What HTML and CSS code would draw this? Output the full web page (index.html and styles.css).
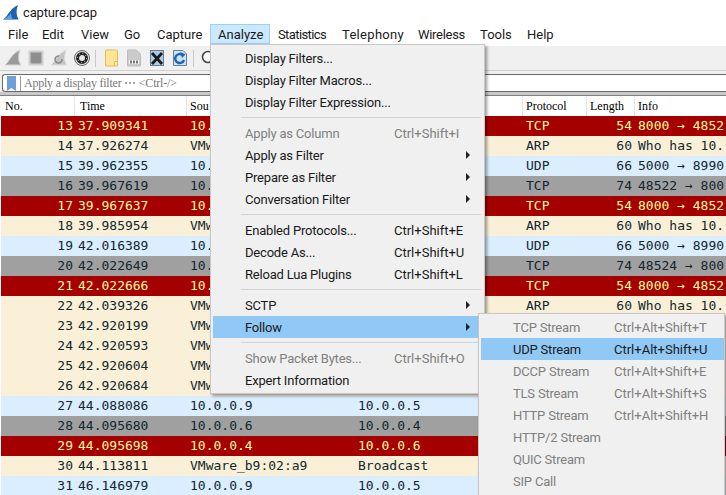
FILE: index.html
```html
<!DOCTYPE html>
<html>
<head>
    <meta charset="utf-8">
    <title>capture.pcap</title>
    <link rel="stylesheet" href="styles.css">
</head>
<body>
    <div class="titlebar">
        <svg width="16" height="15" viewBox="0 0 16 15"><path d="M0 14.5C5 12 6 4 15 0 13 5 13 10 15.5 14.5Z" fill="#1c62ad"/><path d="M0 14.5C4 13 6 11 8 8 8 11 9 13 10 14.5Z" fill="#5fa0de"/></svg>
        <span>capture.pcap</span>
    </div>
    <div class="menubar">
        <span class="top">File</span>
        <span class="top">Edit</span>
        <span class="top">View</span>
        <span class="top">Go</span>
        <span class="top">Capture</span>
        <span class="top open">Analyze</span>
        <span class="top">Statistics</span>
        <span class="top">Telephony</span>
        <span class="top">Wireless</span>
        <span class="top">Tools</span>
        <span class="top">Help</span>
    </div>
    <div class="toolbar">
        <svg width="20" height="18" viewBox="0 0 20 18"><path d="M2 16C6 13 8 5 17 1 15 7 15 12 18 16Z" fill="#9a9a9a" stroke="#d4d4d4"/></svg>
        <svg width="20" height="18" viewBox="0 0 20 18"><rect x="3.5" y="2.5" width="13" height="13" fill="#8f8f8f" stroke="#cfcfcf" stroke-width="2"/></svg>
        <svg width="20" height="18" viewBox="0 0 20 18"><path d="M2 16C6 13 8 5 17 1 15 7 15 12 18 16Z" fill="#c4c4c4" stroke="#dedede"/><path d="M13 10A3.5 3.5 0 1 1 10 7" fill="none" stroke="#8a8a8a" stroke-width="1.5"/></svg>
        <svg width="20" height="18" viewBox="0 0 20 18"><circle cx="10" cy="9" r="7.5" fill="#e6e6e6" stroke="#666"/><circle cx="10" cy="9" r="4.5" fill="none" stroke="#222" stroke-width="3"/><circle cx="10" cy="9" r="4.5" fill="none" stroke="#ddd" stroke-dasharray="1 2.5"/><circle cx="10" cy="9" r="1.2" fill="#eee"/></svg>
        <i class="sep"></i>
        <svg width="20" height="18" viewBox="0 0 20 18"><path d="M4.5 1H15.500L16.500 2V17H4.500Z" fill="#fde59a" stroke="#e6bd52"/><path d="M13.500 17V12.500H16.500" fill="#fff0bd" stroke="#e6bd52"/></svg>
        <svg width="20" height="18" viewBox="0 0 20 18"><path d="M3.500 1H12L16.500 5V17H3.500Z" fill="#cbcbcb" stroke="#bcbcbc"/><path d="M5 11H15V15H5Z" fill="#f4f4f4"/><path d="M6 13H14" stroke="#777" stroke-width="3" stroke-dasharray="2 1"/></svg>
        <svg width="20" height="18" viewBox="0 0 20 18"><rect x="3.500" y="1.500" width="13" height="15" fill="#a9cdea" stroke="#6d7f8d"/><path d="M5 4L15 15M15 4L5 15" stroke="#1c1c1c" stroke-width="2.800"/></svg>
        <svg width="20" height="18" viewBox="0 0 20 18"><path d="M3.500 1.500H13L16.500 5V16.500H3.500Z" fill="#cfe2f2" stroke="#6d7f8d"/><path d="M14 11A4.500 4.500 0 1 1 12.500 6" fill="none" stroke="#1a68b0" stroke-width="2.400"/><path d="M10.500 3L15.500 5.500 12 9Z" fill="#1a68b0"/></svg>
        <i class="sep"></i>
        <svg width="20" height="18" viewBox="0 0 20 18"><circle cx="9" cy="8" r="5.500" fill="#fff" stroke="#444" stroke-width="1.600"/></svg>
    </div>
    <div class="filterbar">
        <div class="filterbox">
            <svg class="bookmark" width="9" height="15" viewBox="0 0 9 15"><path d="M0 0H9V15L4.500 12 0 15Z" fill="#6f9fd8"/></svg>
            <span class="hint">Apply a display filter ⋯ &lt;Ctrl-/&gt;</span>
        </div>
    </div>
    <div class="packets">
        <div class="row head">
            <span class="no">No.</span><span class="time">Time</span><span class="src">Sou</span><span class="dst"></span><span class="proto">Protocol</span><span class="len">Length</span><span class="info">Info</span>
        </div>
        <div class="row red"><span class="no">13</span><span class="time">37.909341</span><span class="src">10.</span><span class="dst"></span><span class="proto">TCP</span><span class="len">54</span><span class="info">8000 → 4852</span></div>
        <div class="row cream"><span class="no">14</span><span class="time">37.926274</span><span class="src">VMw</span><span class="dst"></span><span class="proto">ARP</span><span class="len">60</span><span class="info">Who has 10.</span></div>
        <div class="row blue"><span class="no">15</span><span class="time">39.962355</span><span class="src">10.</span><span class="dst"></span><span class="proto">UDP</span><span class="len">66</span><span class="info">5000 → 8990</span></div>
        <div class="row gray"><span class="no">16</span><span class="time">39.967619</span><span class="src">10.</span><span class="dst"></span><span class="proto">TCP</span><span class="len">74</span><span class="info">48522 → 800</span></div>
        <div class="row red"><span class="no">17</span><span class="time">39.967637</span><span class="src">10.</span><span class="dst"></span><span class="proto">TCP</span><span class="len">54</span><span class="info">8000 → 4852</span></div>
        <div class="row cream"><span class="no">18</span><span class="time">39.985954</span><span class="src">VMw</span><span class="dst"></span><span class="proto">ARP</span><span class="len">60</span><span class="info">Who has 10.</span></div>
        <div class="row blue"><span class="no">19</span><span class="time">42.016389</span><span class="src">10.</span><span class="dst"></span><span class="proto">UDP</span><span class="len">66</span><span class="info">5000 → 8990</span></div>
        <div class="row gray"><span class="no">20</span><span class="time">42.022649</span><span class="src">10.</span><span class="dst"></span><span class="proto">TCP</span><span class="len">74</span><span class="info">48524 → 800</span></div>
        <div class="row red"><span class="no">21</span><span class="time">42.022666</span><span class="src">10.</span><span class="dst"></span><span class="proto">TCP</span><span class="len">54</span><span class="info">8000 → 4852</span></div>
        <div class="row cream"><span class="no">22</span><span class="time">42.039326</span><span class="src">VMw</span><span class="dst"></span><span class="proto">ARP</span><span class="len">60</span><span class="info">Who has 10.</span></div>
        <div class="row cream"><span class="no">23</span><span class="time">42.920199</span><span class="src">VMw</span></div>
        <div class="row cream"><span class="no">24</span><span class="time">42.920593</span><span class="src">VMw</span></div>
        <div class="row cream"><span class="no">25</span><span class="time">42.920604</span><span class="src">VMw</span></div>
        <div class="row cream"><span class="no">26</span><span class="time">42.920684</span><span class="src">VMw</span></div>
        <div class="row blue"><span class="no">27</span><span class="time">44.088086</span><span class="src">10.0.0.9</span><span class="dst">10.0.0.5</span></div>
        <div class="row gray"><span class="no">28</span><span class="time">44.095680</span><span class="src">10.0.0.6</span><span class="dst">10.0.0.4</span></div>
        <div class="row red"><span class="no">29</span><span class="time">44.095698</span><span class="src">10.0.0.4</span><span class="dst">10.0.0.6</span></div>
        <div class="row cream"><span class="no">30</span><span class="time">44.113811</span><span class="src">VMware_b9:02:a9</span><span class="dst">Broadcast</span></div>
        <div class="row blue"><span class="no">31</span><span class="time">46.146979</span><span class="src">10.0.0.9</span><span class="dst">10.0.0.5</span></div>
    </div>

    <div class="menu analyze">
        <div class="item"><span>Display Filters...</span></div>
        <div class="item"><span>Display Filter Macros...</span></div>
        <div class="item"><span>Display Filter Expression...</span></div>
        <div class="divider"></div>
        <div class="item off"><span>Apply as Column</span><span class="key">Ctrl+Shift+I</span></div>
        <div class="item sub"><span>Apply as Filter</span></div>
        <div class="item sub"><span>Prepare as Filter</span></div>
        <div class="item sub"><span>Conversation Filter</span></div>
        <div class="divider"></div>
        <div class="item"><span>Enabled Protocols...</span><span class="key">Ctrl+Shift+E</span></div>
        <div class="item"><span>Decode As...</span><span class="key">Ctrl+Shift+U</span></div>
        <div class="item"><span>Reload Lua Plugins</span><span class="key">Ctrl+Shift+L</span></div>
        <div class="divider"></div>
        <div class="item sub"><span>SCTP</span></div>
        <div class="item sub active"><span>Follow</span></div>
        <div class="divider"></div>
        <div class="item off"><span>Show Packet Bytes...</span><span class="key">Ctrl+Shift+O</span></div>
        <div class="item"><span>Expert Information</span></div>
    </div>

    <div class="menu follow">
        <div class="item off"><span>TCP Stream</span><span class="key">Ctrl+Alt+Shift+T</span></div>
        <div class="item active"><span>UDP Stream</span><span class="key">Ctrl+Alt+Shift+U</span></div>
        <div class="item off"><span>DCCP Stream</span><span class="key">Ctrl+Alt+Shift+E</span></div>
        <div class="item off"><span>TLS Stream</span><span class="key">Ctrl+Alt+Shift+S</span></div>
        <div class="item off"><span>HTTP Stream</span><span class="key">Ctrl+Alt+Shift+H</span></div>
        <div class="item off"><span>HTTP/2 Stream</span></div>
        <div class="item off"><span>QUIC Stream</span></div>
        <div class="item off"><span>SIP Call</span></div>
    </div>
</body>
</html>
```

FILE: styles.css
```css
html, body {
    height: 100%;
}
body {
    position: relative;
    margin: 0;
    overflow: hidden;
    background: white;
    color: #1a1a1a;
    font-family: Roboto, Arial, sans-serif;
    font-size: 13px;
}
.titlebar {
    display: flex;
    align-items: center;
    gap: 4px;
    height: 24px;
    padding-left: 3px;
    letter-spacing: -0.15px;
}
.menubar {
    display: flex;
    height: 20px;
    margin-bottom: 2px;
    line-height: 22px;
}
.top {
    box-sizing: border-box;
    padding-left: 8px;
    white-space: nowrap;
}
.top:nth-child(1) { width: 34px; }
.top:nth-child(2) { width: 39px; }
.top:nth-child(3) { width: 43px; }
.top:nth-child(4) { width: 33px; }
.top:nth-child(5) { width: 61px; }
.top:nth-child(6) { width: 60px; }
.top:nth-child(7) { width: 64px; letter-spacing: -0.6px; }
.top:nth-child(8) { width: 76px; letter-spacing: 0.3px; }
.top:nth-child(9) { width: 62px; letter-spacing: -0.3px; }
.top:nth-child(10) { width: 47px; }
.top.open {
    background: #cce8ff;
    box-shadow: inset 0 0 0 1px #99d1ff;
}
.toolbar {
    display: flex;
    align-items: center;
    gap: 3px;
    height: 24px;
    padding-left: 3px;
    background: #f0f0f0;
    border-bottom: 1px solid #d0d0d0;
}
.sep {
    width: 1px;
    height: 17px;
    margin-right: 2px;
    background: #c8c8c8;
}
.filterbar {
    height: 21px;
    padding: 3px 0 0 2px;
    box-sizing: border-box;
    background: #f0f0f0;
}
.filterbox {
    display: flex;
    align-items: center;
    height: 16px;
    padding-left: 4px;
    background: white;
    border: 1px solid #6a6a6a;
    border-width: 1px 0 1px 1px;
    border-radius: 3px 0 0 3px;
}
.bookmark {
    padding-right: 4px;
    border-right: 1px solid #999;
}
.hint {
    padding-left: 3px;
    color: #777;
    font-family: "Liberation Serif", serif;
    font-size: 12px;
    letter-spacing: -0.22px;
}
.packets {
    height: 399px;
    background: white;
    border-top: 3px solid #c8c8c8;
    box-sizing: border-box;
}
.packets::before {
    content: "";
    display: block;
    height: 1px;
    background: #808080;
}
.row {
    display: flex;
    height: 20px;
    margin-left: 1px;
    line-height: 20px;
    color: #12272e;
    font-family: "DejaVu Sans Mono", monospace;
    font-size: 13px;
    white-space: nowrap;
}
.row span {
    flex: none;
    box-sizing: border-box;
    padding: 0 3px;
    overflow: hidden;
}
.row .no { width: 74px; padding-right: 2px; text-align: right; }
.time { width: 112px; }
.src { width: 168px; }
.dst { width: 168px; }
.proto { width: 64px; }
.len { width: 48px; text-align: right; }
.row .info { flex: 1; }
.red { background: #a40000; color: #fffc9c; }
.cream { background: #faf0d7; }
.blue { background: #daeeff; }
.gray { background: #a0a0a0; }
.row.head {
    color: black;
    font-family: "Liberation Serif", serif;
    font-size: 12px;
}
.row.head span {
    border-right: 1px solid #e4e4e4;
    text-align: left;
}
.row.head .no { padding-left: 4px; }
.row.head .time { padding-left: 5px; }
.row.head .info { border-right: none; }
.menu {
    position: absolute;
    padding: 2px;
    background: #f0f0f0;
    border: 1px solid #c8c8c8;
    box-shadow: 2px 2px 3px rgba(0, 0, 0, 0.4);
    white-space: nowrap;
}
.analyze {
    left: 210px;
    top: 44px;
    width: 269px;
}
.follow {
    left: 478px;
    top: 313px;
    width: 243px;
    height: 181px;
    padding-right: 0;
}
.item {
    position: relative;
    display: flex;
    height: 22px;
    padding-left: 32px;
    line-height: 24px;
    letter-spacing: -0.2px;
}
.item .key {
    position: absolute;
    left: 181px;
    letter-spacing: 0;
}
.follow .item .key {
    left: 133px;
}
.off {
    color: #808080;
}
.active {
    background: #90c8f6;
}
.sub::after {
    content: "";
    position: absolute;
    right: 12px;
    top: 7px;
    border: 4px solid transparent;
    border-left-color: #222;
    border-right-width: 0;
}
.divider {
    height: 1px;
    margin: 4px 1px 4px 28px;
    background: #d4d4d4;
}
```
